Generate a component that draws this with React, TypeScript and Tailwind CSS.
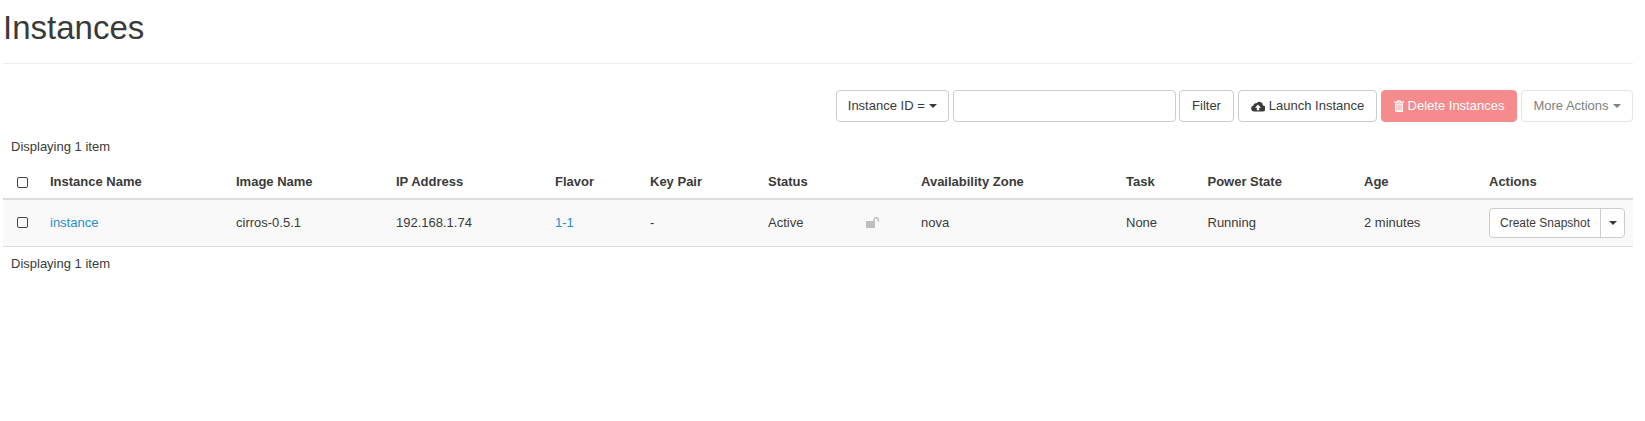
const font = { fontFamily: '"Liberation Sans", Arial, sans-serif' };

const Caret = ({ className = "" }: { className?: string }) => (
  <span className={`inline-block w-0 h-0 border-x-[4px] border-x-transparent border-t-[4px] border-t-current align-middle ${className}`} />
);

const CloudUpload = () => (
  <svg width="14" height="12" viewBox="0 0 14 12" className="block" fill="currentColor">
    <path d="M3.2 11.5A3 3 0 0 1 2.4 5.6 2.6 2.6 0 0 1 5.3 3.3 3.7 3.7 0 0 1 12 5.5 3 3 0 0 1 11 11.5Z" />
    <path d="M7 4.6 10 7.8H8.2V10.2H5.8V7.8H4Z" fill="#fff" />
  </svg>
);

const TrashIcon = () => (
  <svg width="10" height="12" viewBox="0 0 10 12" className="block" fill="currentColor">
    <path d="M3.2 1.6V.9Q3.2 0 4.1 0H5.9Q6.8 0 6.8.9V1.6H10V2.7H0V1.6ZM4 1.6H6V.8H4Z" fill="#fff" fillRule="evenodd" />
    <path d="M1 3.4H9V10.8Q9 12 7.9 12H2.1Q1 12 1 10.8ZM2.5 4.6V10.6H3.4V4.6ZM4.55 4.6V10.6H5.45V4.6ZM6.6 4.6V10.6H7.5V4.6Z" fillRule="evenodd" />
  </svg>
);

const LockOpen = () => (
  <svg width="14" height="11" viewBox="0 0 14 11" className="block">
    <rect x="0" y="4" width="9" height="7" fill="#bfbfbf" />
    <path d="M8 4.5V2.9a2.2 2.2 0 0 1 4.4 0V4.5" fill="none" stroke="#bfbfbf" strokeWidth="1.5" />
  </svg>
);

const Check = () => <span className="block w-[11px] h-[11px] mx-auto border border-[#444] rounded-[2px]" />;

const columns = [
  { label: "Instance Name", w: "w-[186px]" },
  { label: "Image Name", w: "w-[160px]" },
  { label: "IP Address", w: "w-[159px]" },
  { label: "Flavor", w: "w-[95px]" },
  { label: "Key Pair", w: "w-[118px]" },
  { label: "Status", w: "w-[98px]" },
  { label: "", w: "w-[55px]" },
  { label: "Availability Zone", w: "w-[205px]" },
  { label: "Task", w: "w-[81.5px]" },
  { label: "Power State", w: "w-[156.5px]" },
  { label: "Age", w: "w-[125px]" },
  { label: "Actions", w: "" },
];

const btn = "h-[32px] border rounded-[4px] text-[13px] whitespace-nowrap flex items-center justify-center";

export default function App() {
  return (
    <div style={font} className="w-[1645px] h-[421px] bg-white text-[#3a3a3a] text-[13px] pl-[3px] pr-[12px] overflow-hidden">
      <h1 className="text-[33px] leading-[35px] font-normal pt-[10px] h-[64px] border-b border-[#eee]">Instances</h1>

      <div className="flex justify-end gap-[4px] mt-[26px]">
        <button className={`${btn} w-[113.5px] border-[#ccc] gap-[4px]`}>
          Instance ID = <Caret />
        </button>
        <input className="w-[222.5px] h-[32px] mr-[-0.5px] border border-[#ccc] rounded-[4px]" />
        <button className={`${btn} w-[55px] border-[#ccc]`}>Filter</button>
        <button className={`${btn} w-[139px] border-[#ccc] gap-[4px]`}>
          <CloudUpload /> Launch Instance
        </button>
        <button className={`${btn} w-[136px] bg-[#f58b8d] border-[#f58b8d] text-white gap-[4px]`}>
          <TrashIcon /> Delete Instances
        </button>
        <button className={`${btn} w-[112px] border-[#e4e4e4] text-[#808080] gap-[4px]`}>
          More Actions <Caret />
        </button>
      </div>

      <div className="px-2 mt-[16px] leading-[18px]">Displaying 1 item</div>

      <table className="w-[1630px] table-fixed border-collapse mt-[10px]">
        <thead>
          <tr className="h-[33px] border-b-2 border-[#ddd]">
            <th className="w-[39px] font-normal"><Check /></th>
            {columns.map((c, i) => (
              <th key={i} className={`${c.w} text-left font-bold px-2`}>{c.label}</th>
            ))}
          </tr>
        </thead>
        <tbody>
          <tr className="h-[47px] bg-[#f9f9f9] border-b border-[#ddd]">
            <td><Check /></td>
            <td className="px-2 text-[#1d8fcb]">instance</td>
            <td className="px-2">cirros-0.5.1</td>
            <td className="px-2">192.168.1.74</td>
            <td className="px-2 text-[#1d8fcb]">1-1</td>
            <td className="px-2">-</td>
            <td className="px-2">Active</td>
            <td className="px-2"><LockOpen /></td>
            <td className="px-2">nova</td>
            <td className="px-2">None</td>
            <td className="px-2">Running</td>
            <td className="px-2">2 minutes</td>
            <td className="px-2">
              <div className="flex h-[30px] w-[136px] border border-[#ccc] rounded-[4px] text-[12px] bg-white">
                <span className="flex-1 flex items-center justify-center border-r border-[#ccc]">Create Snapshot</span>
                <span className="w-[23px] flex items-center justify-center"><Caret /></span>
              </div>
            </td>
          </tr>
        </tbody>
      </table>

      <div className="px-2 mt-[8px] leading-[18px]">Displaying 1 item</div>
    </div>
  );
}
